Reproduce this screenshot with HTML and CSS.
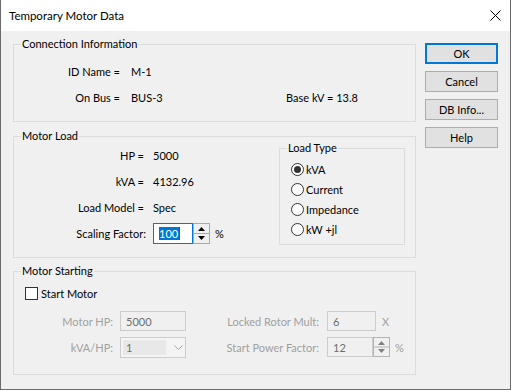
FILE: index.html
```html
<!DOCTYPE html>
<html>
<head>
<meta charset="utf-8">
<link rel="stylesheet" href="styles.css">
</head>
<body>
<div class="window">
  <div class="titlebar">
    <span class="title">Temporary Motor Data</span>
    <svg class="close" width="11" height="11" viewBox="0 0 11 11"><path d="M0.5 0.5 L10.5 10.5 M10.5 0.5 L0.5 10.5" stroke="#000" stroke-width="1" fill="none"/></svg>
  </div>
  <div class="content">
    <div class="groups">
      <div class="group g-conn">
        <span class="group-title">Connection Information</span>
        <div class="conn-grid">
          <span class="lbl">ID Name =</span><span class="val">M-1</span><span></span>
          <span class="lbl">On Bus =</span><span class="val">BUS-3</span><span>Base kV = 13.8</span>
        </div>
      </div>

      <div class="group g-load">
        <span class="group-title">Motor Load</span>
        <div class="load-grid">
          <span class="lbl">HP =</span><span class="val">5000</span>
          <span class="lbl">kVA =</span><span class="val">4132.96</span>
          <span class="lbl">Load Model =</span><span class="val">Spec</span>
          <span class="lbl lbl-colon">Scaling Factor:</span>
          <span class="val spin-row">
            <span class="spin-input"><span class="sel">100</span><span class="caret"></span></span>
            <svg class="spinner" width="17" height="21" viewBox="0 0 17 21">
              <rect x="0.5" y="0.5" width="16" height="20" fill="#f0f0f0" stroke="#a9a9a9"/>
              <line x1="1" y1="10.5" x2="16" y2="10.5" stroke="#a9a9a9"/>
              <path d="M5 8 L12 8 L8.5 4 Z" fill="#000"/>
              <path d="M5 13 L12 13 L8.5 17 Z" fill="#000"/>
            </svg>
            <span class="suffix">%</span>
          </span>
        </div>
        <div class="loadtype">
          <span class="group-title">Load Type</span>
          <div class="radio-row"><span class="radio checked"></span><span>kVA</span></div>
          <div class="radio-row"><span class="radio"></span><span>Current</span></div>
          <div class="radio-row"><span class="radio"></span><span>Impedance</span></div>
          <div class="radio-row"><span class="radio"></span><span>kW +jl</span></div>
        </div>
      </div>

      <div class="group g-start">
        <span class="group-title">Motor Starting</span>
        <div class="check-row"><span class="checkbox"></span><span>Start Motor</span></div>
        <div class="start-grid">
          <span class="lbl dis">Motor HP:</span>
          <span class="cell"><span class="dis-input w66">5000</span></span>
          <span class="lbl dis">Locked Rotor Mult:</span>
          <span class="cell2"><span class="dis-input w49">6</span><span class="suffix dis x">X</span></span>

          <span class="lbl dis">kVA/HP:</span>
          <span class="cell"><span class="combo"><span class="combo-text">1</span>
            <svg class="chev" width="9" height="5" viewBox="0 0 9 5"><path d="M0.5 0.5 L4.5 4.5 L8.5 0.5" stroke="#a6a6a6" fill="none"/></svg></span></span>
          <span class="lbl dis">Start Power Factor:</span>
          <span class="cell2"><span class="dis-input w46">12</span>
            <svg class="spinner" width="17" height="20" viewBox="0 0 17 20">
              <rect x="0.5" y="0.5" width="16" height="19" fill="#f0f0f0" stroke="#b4b4b4"/>
              <line x1="1" y1="10" x2="16" y2="10" stroke="#b4b4b4"/>
              <path d="M5 8 L12 8 L8.5 4 Z" fill="#808080"/>
              <path d="M5 12 L12 12 L8.5 16 Z" fill="#808080"/>
            </svg>
            <span class="suffix dis">%</span></span>
        </div>
      </div>
    </div>

    <div class="buttons">
      <div class="btn default">OK</div>
      <div class="btn">Cancel</div>
      <div class="btn">DB Info...</div>
      <div class="btn">Help</div>
    </div>
  </div>
</div>
</body>
</html>
```

FILE: styles.css
```css
* { box-sizing: border-box; }
body {
  margin: 0;
  font-family: Lato, "Noto Sans", sans-serif;
  font-size: 11px;
  color: #000;
}
.window {
  width: 511px;
  height: 390px;
  background: #f0f0f0;
  border: 1px solid #6a6a6a;
  border-top: none;
  display: flex;
  flex-direction: column;
}
.titlebar {
  height: 31px;
  background: #fff;
  display: flex;
  align-items: center;
  justify-content: space-between;
  padding: 0 9px 0 8px;
  flex-shrink: 0;
}
.title { line-height: 16px; font-size: 11.5px; }
.close { display: block; }
.content {
  display: flex;
  padding: 12px 12px 0 12px;
  gap: 9px;
}
.groups {
  width: 403px;
  display: flex;
  flex-direction: column;
}
.group {
  position: relative;
  border: 1px solid #dcdcdc;
}
.group-title {
  position: absolute;
  top: -9px;
  left: 7px;
  padding: 0 1px;
  background: #f0f0f0;
  line-height: 16px;
  white-space: nowrap;
}
.g-conn { margin-top: 1px; height: 78px; }
.g-load { margin-top: 14px; height: 122px; display: flex; justify-content: space-between; align-items: flex-start; padding: 5px 10px 0 0; }
.g-start { margin-top: 13px; height: 104px; padding-top: 11px; }

.lbl { text-align: right; white-space: nowrap; }
.conn-grid {
  display: grid;
  grid-template-columns: 106px 166px auto;
  grid-auto-rows: 26px;
  align-items: center;
  padding-top: 13px;
}
.conn-grid .val { padding-left: 11px; }

.load-grid {
  display: grid;
  grid-template-columns: 130px auto;
  grid-auto-rows: 26px;
  align-items: center;
}
.load-grid .val { padding-left: 9px; }
.lbl-colon { margin-right: -2px; }
.spin-row { display: flex; align-items: center; }
.spin-input {
  width: 40px;
  height: 21px;
  border: 1px solid #0078d7;
  background: #fff;
  padding-left: 5px;
  display: flex;
  align-items: center;
}
.sel {
  background: #0078d7;
  color: #fff;
  height: 13px;
  line-height: 13px;
  padding-right: 1px;
}
.caret { width: 1px; height: 13px; background: #7a4a1a; }
.spinner { display: block; }
.suffix { margin-left: 5px; }

.loadtype {
  position: relative;
  margin-top: 6px;
  width: 126px;
  height: 97px;
  border: 1px solid #dcdcdc;
  padding: 10px 0 0 11px;
}
.radio-row {
  height: 20px;
  display: flex;
  align-items: center;
  gap: 2px;
}
.radio {
  width: 13px;
  height: 13px;
  border: 1px solid #333;
  border-radius: 50%;
  background: #fff;
  display: flex;
  align-items: center;
  justify-content: center;
}
.radio.checked::after {
  content: "";
  width: 7px;
  height: 7px;
  border-radius: 50%;
  background: #333;
}

.check-row {
  height: 20px;
  display: flex;
  align-items: center;
  gap: 3px;
  margin-left: 11px;
}
.checkbox {
  width: 13px;
  height: 13px;
  border: 1px solid #333;
  background: #fff;
}
.start-grid {
  margin-top: 5px;
  display: grid;
  grid-template-columns: 99px 73px 133px auto;
  grid-auto-rows: 26px;
  align-items: center;
}
.cell { padding-left: 7px; display: flex; }
.cell2 { padding-left: 8px; display: flex; align-items: center; }
.dis { color: #a0a0a0; }
.dis-input {
  height: 20px;
  border: 1px solid #cccccc;
  background: #f0f0f0;
  color: #6d6d6d;
  padding-left: 5px;
  display: flex;
  align-items: center;
}
.w66 { width: 66px; }
.w49 { width: 49px; }
.w46 { width: 46px; }
.x { margin-left: 6px; }
.combo {
  width: 66px;
  height: 21px;
  border: 1px solid #cccccc;
  background: #f4f4f4;
  display: flex;
  align-items: center;
  padding: 2px;
}
.combo-text {
  width: 43px;
  height: 15px;
  background: #e8e8e8;
  color: #6d6d6d;
  padding-left: 3px;
  line-height: 15px;
}
.chev { margin-left: 8px; display: block; }

.buttons {
  display: flex;
  flex-direction: column;
  gap: 7px;
}
.btn {
  width: 73px;
  height: 21px;
  border: 1px solid #adadad;
  background: #e1e1e1;
  display: flex;
  align-items: center;
  justify-content: center;
}
.btn.default { border: 2px solid #0078d7; }
```
